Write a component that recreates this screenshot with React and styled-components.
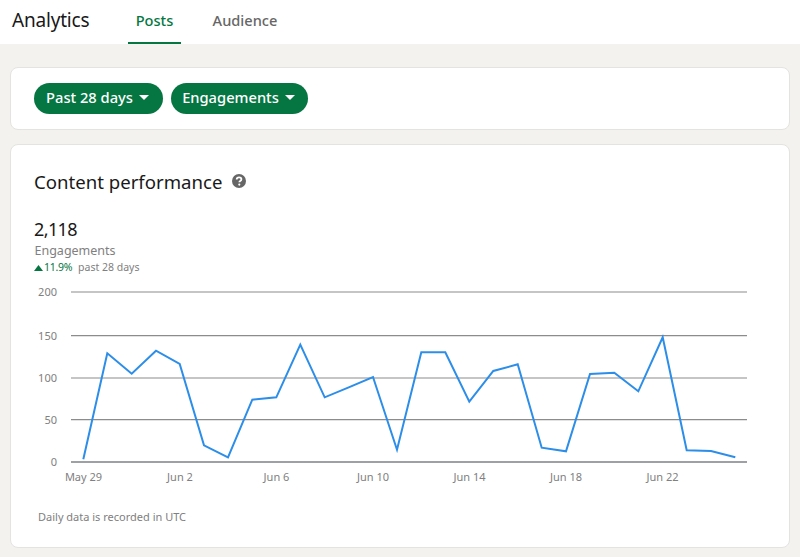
import React from "react";
import styled, { createGlobalStyle } from "styled-components";

const Global = createGlobalStyle`
  html, body { margin: 0; padding: 0; background: #f3f2ef; }
  body { font-family: "Noto Sans", "Open Sans", "Liberation Sans", sans-serif; }
`;

const Page = styled.div`
  width: 800px;
  height: 557px;
  overflow: hidden;
  background: #f3f2ef;
`;

const Header = styled.header`
  height: 44px;
  background: #fff;
  display: flex;
  align-items: stretch;
  padding-left: 12px;
  box-sizing: border-box;
`;

const Title = styled.h1`
  margin: 0 38px 0 0;
  width: 78px;
  font-size: 19px;
  line-height: 41px;
  font-weight: 400;
  letter-spacing: -0.2px;
  white-space: nowrap;
  color: #191919;
`;

const Tab = styled.div`
  width: ${(p) => p.$width}px;
  margin-right: ${(p) => p.$gap || 0}px;
  text-align: center;
  font-size: 14.6px;
  line-height: 41px;
  font-weight: 500;
  color: ${(p) => (p.$active ? "#057642" : "#666666")};
  border-bottom: 2px solid ${(p) => (p.$active ? "#057642" : "transparent")};
  box-sizing: border-box;
`;

const Main = styled.main`
  padding: 23px 10px 0;
  display: flex;
  flex-direction: column;
  gap: 14px;
`;

const Card = styled.section`
  background: #fff;
  border: 1px solid #e4e3e0;
  border-radius: 8px;
  box-sizing: border-box;
`;

const FilterCard = styled(Card)`
  height: 63px;
  display: flex;
  align-items: center;
  gap: 8px;
  padding: 0 23px;
`;

const Pill = styled.button`
  height: 31px;
  width: ${(p) => p.$width}px;
  border: 0;
  border-radius: 16px;
  background: #057642;
  color: #fff;
  font: 500 14.7px "Noto Sans", sans-serif;
  line-height: 29px;
  display: flex;
  align-items: flex-start;
  justify-content: center;
  gap: 6px;
  padding: 0 2px 0 0;
`;

const Caret = styled.span`
  width: 0;
  height: 0;
  margin-top: 12px;
  border-left: 5px solid transparent;
  border-right: 5px solid transparent;
  border-top: 5px solid #fff;
`;

const ChartCard = styled(Card)`
  height: 404px;
  padding: 23px 0 0 23px;
`;

const Heading = styled.div`
  display: flex;
  align-items: center;
  gap: 10px;
  height: 26px;
  font-size: 18.6px;
  white-space: nowrap;
  color: #191919;
`;

const Total = styled.div`
  margin-top: 22px;
  font-size: 18px;
  line-height: 26px;
  letter-spacing: -0.6px;
  color: #191919;
`;

const MetricLabel = styled.div`
  font-size: 12.5px;
  line-height: 17px;
  margin-left: 0.5px;
  color: #808080;
`;

const Delta = styled.div`
  font-size: 10.5px;
  line-height: 17px;
  color: #808080;
  display: flex;
  align-items: center;
  gap: 1px;
`;

const DeltaValue = styled.span`
  color: #057642;
  margin-right: 5px;
  letter-spacing: -0.3px;
`;

const ChartSvg = styled.svg`
  display: block;
  margin-top: 8px;
  width: 726px;
  height: 206px;
  text {
    font-family: "Noto Sans", sans-serif;
    font-size: 11px;
    fill: #808080;
  }
`;

const Footnote = styled.p`
  margin: 19px 0 0 4px;
  font-size: 11px;
  line-height: 16px;
  color: #808080;
`;

const points = [
  [83.3,459.3],[107.3,353.3],[131.7,373.7],[156,350.7],[179.7,364],[204,445.3],[228,457.3],
  [252.3,399.7],[276.3,397.3],[300.3,344.7],[324.7,397.3],[348.7,387.3],[373,377],[397,449.7],
  [421.3,352.3],[445.3,352.3],[469.3,401.7],[493.3,371],[517.7,364.3],[541.7,447.7],[566,451.3],
  [590,374],[614.3,372.7],[638.3,391.3],[662.7,337.3],[686.7,450.3],[711,451],[735.3,457.3],
];
const grid = [
  ["200", 292], ["150", 335.7], ["100", 378], ["50", 419.7], ["0", 462],
];
const xLabels = [
  ["May 29", 83.5], ["Jun 2", 180], ["Jun 6", 276.5], ["Jun 10", 373],
  ["Jun 14", 469.5], ["Jun 18", 566], ["Jun 22", 662.5],
];

const HelpIcon = () => (
  <svg width="14" height="14" viewBox="0 0 14 14">
    <circle cx="7" cy="7" r="7" fill="#666" />
    <path d="M4.7 5.5c0-1.3 1-2.1 2.4-2.1 1.3 0 2.3.7 2.3 1.8 0 1-.6 1.4-1.2 1.8-.5.3-.8.6-.8 1.2" fill="none" stroke="#fff" strokeWidth="1.8" />
    <circle cx="7.3" cy="10.6" r="1.1" fill="#fff" />
  </svg>
);

const UpArrow = () => (
  <svg width="9" height="6" viewBox="0 0 9 6"><path d="M4.5 0L9 6H0z" fill="#057642" /></svg>
);

export default function App() {
  return (
    <Page>
      <Global />
      <Header>
        <Title>Analytics</Title>
        <Tab $active $width={53} $gap={31}>Posts</Tab>
        <Tab $width={66}>Audience</Tab>
      </Header>
      <Main>
        <FilterCard>
          <Pill $width={129}>Past 28 days<Caret /></Pill>
          <Pill $width={137}>Engagements<Caret /></Pill>
        </FilterCard>
        <ChartCard>
          <Heading>Content performance <HelpIcon /></Heading>
          <Total>2,118</Total>
          <MetricLabel>Engagements</MetricLabel>
          <Delta><UpArrow /><DeltaValue>11.9%</DeltaValue>past 28 days</Delta>
          <ChartSvg viewBox="34 284 726 206">
            {grid.map(([label, y]) => (
              <g key={label}>
                <line x1="71" x2="747" y1={y} y2={y} stroke={label === "0" ? "#7d8287" : "#8c8c8c"} strokeWidth={label === "0" ? 1.5 : 1.2} />
                <text x="57" y={y + 4} textAnchor="end">{label}</text>
              </g>
            ))}
            <polyline points={points.map((p) => p.join(",")).join(" ")} fill="none" stroke="#2c8ee8" strokeWidth="2" />
            {xLabels.map(([label, x]) => (
              <text key={label} x={x} y={481} textAnchor="middle">{label}</text>
            ))}
          </ChartSvg>
          <Footnote>Daily data is recorded in UTC</Footnote>
        </ChartCard>
      </Main>
    </Page>
  );
}
